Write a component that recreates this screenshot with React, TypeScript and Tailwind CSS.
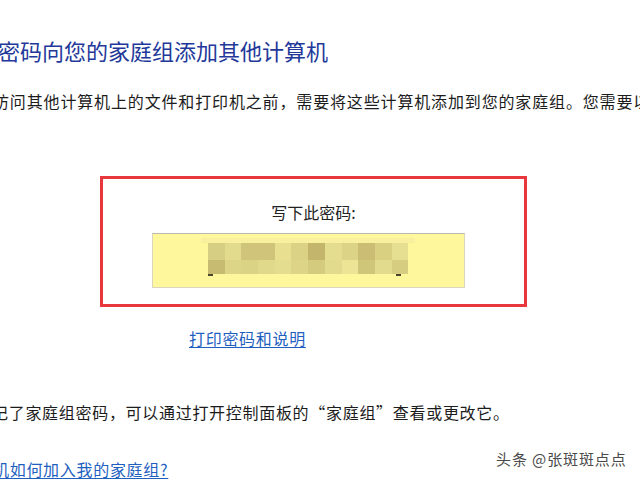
import React from "react";

const row1 = [
    "bg-[#d6ce82]", "bg-[#e2da8c]", "bg-[#cfc47a]", "bg-[#cfc47a]", "bg-[#e8df90]", "bg-[#dbd285]",
    "bg-[#c3b56b]", "bg-[#e4dc8e]", "bg-[#dcd386]", "bg-[#cbbd73]", "bg-[#d9d082]", "bg-[#e6de90]",
];
const row2 = [
    "bg-[#c7bb71]", "bg-[#dcd486]", "bg-[#dad285]", "bg-[#e0d88a]", "bg-[#e4dc8e]", "bg-[#ddd487]",
    "bg-[#d4cb7e]", "bg-[#e2da8c]", "bg-[#ede595]", "bg-[#d0c67a]", "bg-[#e2da8c]", "bg-[#d6cd80]",
];

const App = () => {
    return (
        <div className="relative h-[480px] w-[640px] overflow-hidden bg-white font-['Noto_Sans_CJK_SC','Noto_Sans',sans-serif] text-[#1c1c1c]">
            <div className="flex flex-col items-start pt-[35px]">
                <h1 className="ml-[-2px] text-[22px] leading-[30px] text-[#23399a] whitespace-nowrap">
                    密码向您的家庭组添加其他计算机
                </h1>
                <p className="mt-[24px] ml-[-7px] text-[16px] leading-[24px] tracking-[0.85px] whitespace-nowrap">
                    访问其他计算机上的文件和打印机之前，需要将这些计算机添加到您的家庭组。您需要以
                </p>

                {/* password box */}
                <div className="mt-[63px] ml-[100px] h-[131px] w-[427px] border-[3px] border-[#e8383e] flex flex-col">
                    <div className="pt-[21px] text-center text-[16px] leading-[24px] text-[#222]">写下此密码:</div>
                    <div className="mt-[9px] ml-[49px] h-[55px] w-[313px] border border-[#d9d6bc] border-t-[#b9b9b0] bg-[#fff79c] flex flex-col pl-[55px] pt-[4px]">
                        <div className="ml-[-7px] h-[5px] w-[214px] bg-[#f8f09e]" />
                        <div className="flex">
                            {row1.map((c, i) => (
                                <div key={i} className={`h-[17px] w-[16.7px] ${c}`} />
                            ))}
                        </div>
                        <div className="flex">
                            {row2.map((c, i) => (
                                <div key={i} className={`h-[14px] w-[16.7px] ${c}`} />
                            ))}
                        </div>
                        <div className="flex justify-between w-[193px]">
                            <div className="h-[2px] w-[5px] bg-[#4a4530]" />
                            <div className="h-[2px] w-[5px] bg-[#4a4530]" />
                        </div>
                    </div>
                </div>

                <a className="mt-[19px] ml-[189px] text-[16px] leading-[24px] tracking-[0.7px] text-[#1f5fbf] underline underline-offset-2 whitespace-nowrap">
                    打印密码和说明
                </a>

                <p className="mt-[50px] ml-[-8px] text-[16px] leading-[24px] tracking-[0.7px] whitespace-nowrap">
                    记了家庭组密码，可以通过打开控制面板的“家庭组”查看或更改它。
                </p>

                <a className="mt-[33px] ml-[-7px] text-[16px] leading-[24px] tracking-[0.7px] text-[#1f5fbf] underline underline-offset-2 whitespace-nowrap">
                    机如何加入我的家庭组?
                </a>
            </div>

            <div className="absolute left-[496px] top-[448px] text-[15px] leading-[22px] tracking-[0.9px] text-[#4a4a4a] [text-shadow:0_0_2px_#fff,0_0_1px_#fff] whitespace-nowrap">
                头条 @张斑斑点点
            </div>
        </div>
    );
};

export default App;
